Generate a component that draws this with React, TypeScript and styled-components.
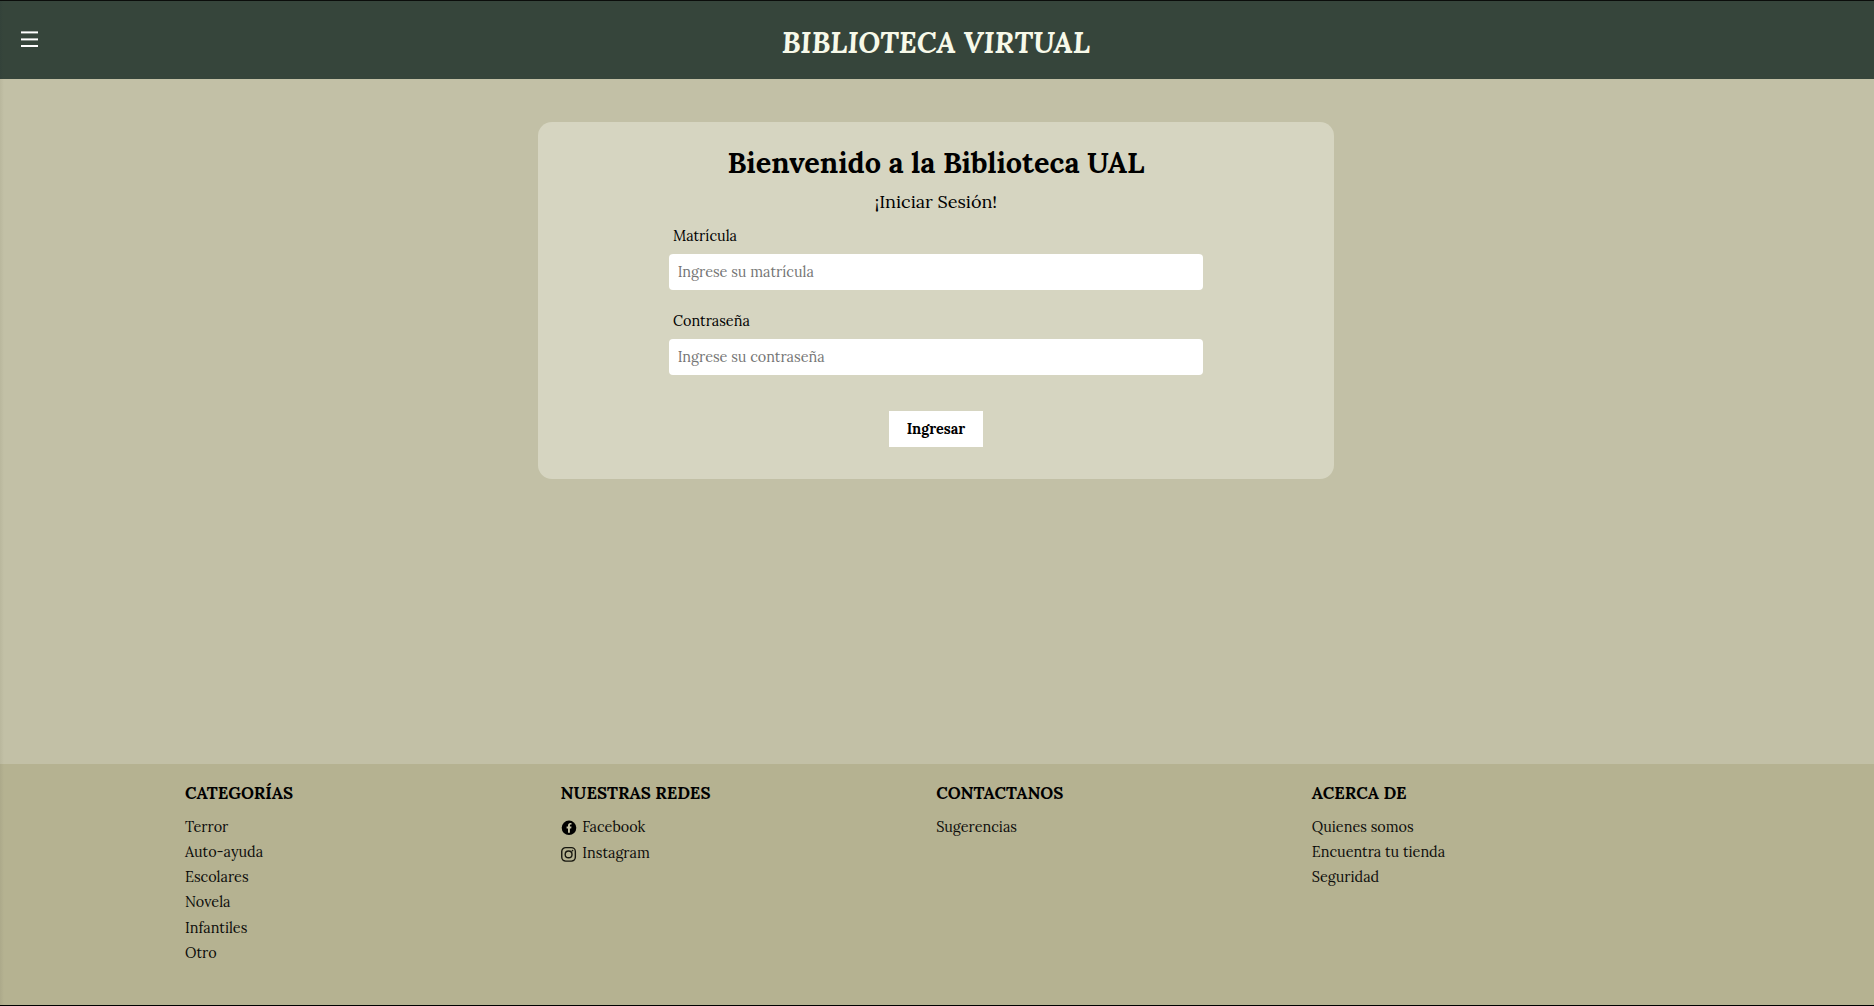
import React from "react";
import styled, { createGlobalStyle } from "styled-components";

const GlobalStyle = createGlobalStyle`
  *, *::before, *::after { box-sizing: border-box; }
  body {
    margin: 0;
    background: #c2c0a6;
    color: #000;
    font-family: Lora, "Liberation Serif", "Times New Roman", serif;
    font-size: 14.4px;
  }
`;

const Page = styled.div`
  display: flex;
  flex-direction: column;
  height: 100vh;
  overflow: hidden;
  border-top: 1px solid #0b0d0b;
  border-bottom: 1px solid #000;
  background: linear-gradient(to right, #b9b79d 0, #c2c0a6 4px);
`;

const Header = styled.header`
  display: grid;
  grid-template-columns: 60px 1fr 62px;
  flex: none;
  height: 78px;
  background: linear-gradient(to right, #33423a 0, #36453b 3px);
`;

const MenuButton = styled.button`
  width: 60px;
  height: 76px;
  padding: 0 0 0 21px;
  border: 0;
  background: none;
  text-align: left;
  line-height: 0;
`;

const SiteTitle = styled.h1`
  margin: 0;
  padding-top: 5px;
  color: #f7f9e9;
  font-size: 28.8px;
  font-style: italic;
  font-weight: 700;
  line-height: 73px;
  text-align: center;
`;

const Main = styled.main`
  flex: 1;
  display: flex;
  justify-content: center;
  align-items: flex-start;
  padding: 43px 2px 0 0;
`;

const Card = styled.section`
  width: 796px;
  height: 357px;
  padding-top: 20px;
  border-radius: 14px;
  background: #d6d5c1;
  display: flex;
  flex-direction: column;
  align-items: center;
`;

const Welcome = styled.h2`
  margin: 0;
  font-size: 28.8px;
  font-weight: 700;
  line-height: 41px;
`;

const Subtitle = styled.p`
  margin: 0 0 1px;
  font-size: 18px;
  line-height: 37px;
`;

const Form = styled.form`
  width: 534px;
  display: flex;
  flex-direction: column;
`;

const Field = styled.div`
  display: flex;
  flex-direction: column;
  gap: 3px;
  & + & { margin-top: 16px; }
`;

const Label = styled.label`
  padding-left: 4px;
  line-height: 30px;
`;

const Input = styled.input`
  height: 36px;
  padding: 0 8.64px;
  border: 0;
  border-radius: 4px;
  background: #fff;
  font-family: inherit;
  font-size: 14.4px;
  &::placeholder { color: #757575; }
`;

const Submit = styled.button`
  align-self: center;
  width: 94px;
  height: 36px;
  margin-top: 36px;
  padding: 0;
  border: 0;
  background: #fff;
  color: #000;
  font-family: inherit;
  font-size: 14.4px;
  font-weight: 700;
`;

const Footer = styled.footer`
  flex: none;
  display: grid;
  grid-template-columns: repeat(4, 375.6px);
  height: 241px;
  padding: 15px 0 0 185px;
  background: linear-gradient(to right, #aca98a 0, #b5b291 4px);
`;

const ColumnTitle = styled.h3`
  margin: 0 0 7.75px;
  font-size: 16.85px;
  font-weight: 700;
  line-height: 28px;
`;

const List = styled.ul`
  margin: 0;
  padding: 0;
  list-style: none;
`;

const Item = styled.li<{ $social?: boolean }>`
  display: flex;
  align-items: center;
  gap: 5.7px;
  padding-bottom: ${(p) => (p.$social ? 1 : 0)}px;
  color: #0c0c0a;
  line-height: ${(p) => (p.$social ? 25 : 25.2)}px;
  svg { flex: none; margin-top: 2px; }
`;

const MenuIcon = () => (
  <svg width="17" height="16" viewBox="0 0 17 16" fill="#fff">
    <rect y="0.4" width="17" height="2" />
    <rect y="7.4" width="17" height="2" />
    <rect y="14" width="17" height="2" />
  </svg>
);

const FacebookIcon = () => (
  <svg width="16" height="16" viewBox="0 0 16 16">
    <circle cx="8" cy="7.8" r="7.3" fill="#000" />
    <path
      d="M7 12.7V8.4H5.6V6.6H7V5.4c0-1.5.9-2.4 2.3-2.4h1.2v1.6h-.8c-.6 0-.8.4-.8.9v1.1h1.6l-.3 1.8H8.9v4.3z"
      fill="#c6c3a5"
    />
  </svg>
);

const InstagramIcon = () => (
  <svg width="16" height="16" viewBox="0 0 16 16" fill="none" stroke="#17170f" strokeWidth="1.4">
    <rect x="0.75" y="1.6" width="13.6" height="13.5" rx="4" />
    <circle cx="7.6" cy="8.4" r="3.4" />
    <circle cx="11.5" cy="4.6" r="0.85" fill="#17170f" stroke="none" />
  </svg>
);

type Entry = { text: string; icon?: React.ReactNode };
type ColumnData = { title: string; items: Entry[] };

const columns: ColumnData[] = [
  {
    title: "CATEGORÍAS",
    items: [
      { text: "Terror" },
      { text: "Auto-ayuda" },
      { text: "Escolares" },
      { text: "Novela" },
      { text: "Infantiles" },
      { text: "Otro" },
    ],
  },
  {
    title: "NUESTRAS REDES",
    items: [
      { text: "Facebook", icon: <FacebookIcon /> },
      { text: "Instagram", icon: <InstagramIcon /> },
    ],
  },
  {
    title: "CONTACTANOS",
    items: [{ text: "Sugerencias" }],
  },
  {
    title: "ACERCA DE",
    items: [
      { text: "Quienes somos" },
      { text: "Encuentra tu tienda" },
      { text: "Seguridad" },
    ],
  },
];

export default function App() {
  return (
    <>
      <GlobalStyle />
      <Page>
        <Header>
          <MenuButton aria-label="Menú">
            <MenuIcon />
          </MenuButton>
          <SiteTitle>BIBLIOTECA VIRTUAL</SiteTitle>
        </Header>
        <Main>
          <Card>
            <Welcome>Bienvenido a la Biblioteca UAL</Welcome>
            <Subtitle>¡Iniciar Sesión!</Subtitle>
            <Form>
              <Field>
                <Label htmlFor="matricula">Matrícula</Label>
                <Input id="matricula" placeholder="Ingrese su matrícula" />
              </Field>
              <Field>
                <Label htmlFor="contrasena">Contraseña</Label>
                <Input id="contrasena" type="password" placeholder="Ingrese su contraseña" />
              </Field>
              <Submit type="button">Ingresar</Submit>
            </Form>
          </Card>
        </Main>
        <Footer>
          {columns.map((column) => (
            <div key={column.title}>
              <ColumnTitle>{column.title}</ColumnTitle>
              <List>
                {column.items.map((item) => (
                  <Item key={item.text} $social={!!item.icon}>
                    {item.icon}
                    {item.text}
                  </Item>
                ))}
              </List>
            </div>
          ))}
        </Footer>
      </Page>
    </>
  );
}
